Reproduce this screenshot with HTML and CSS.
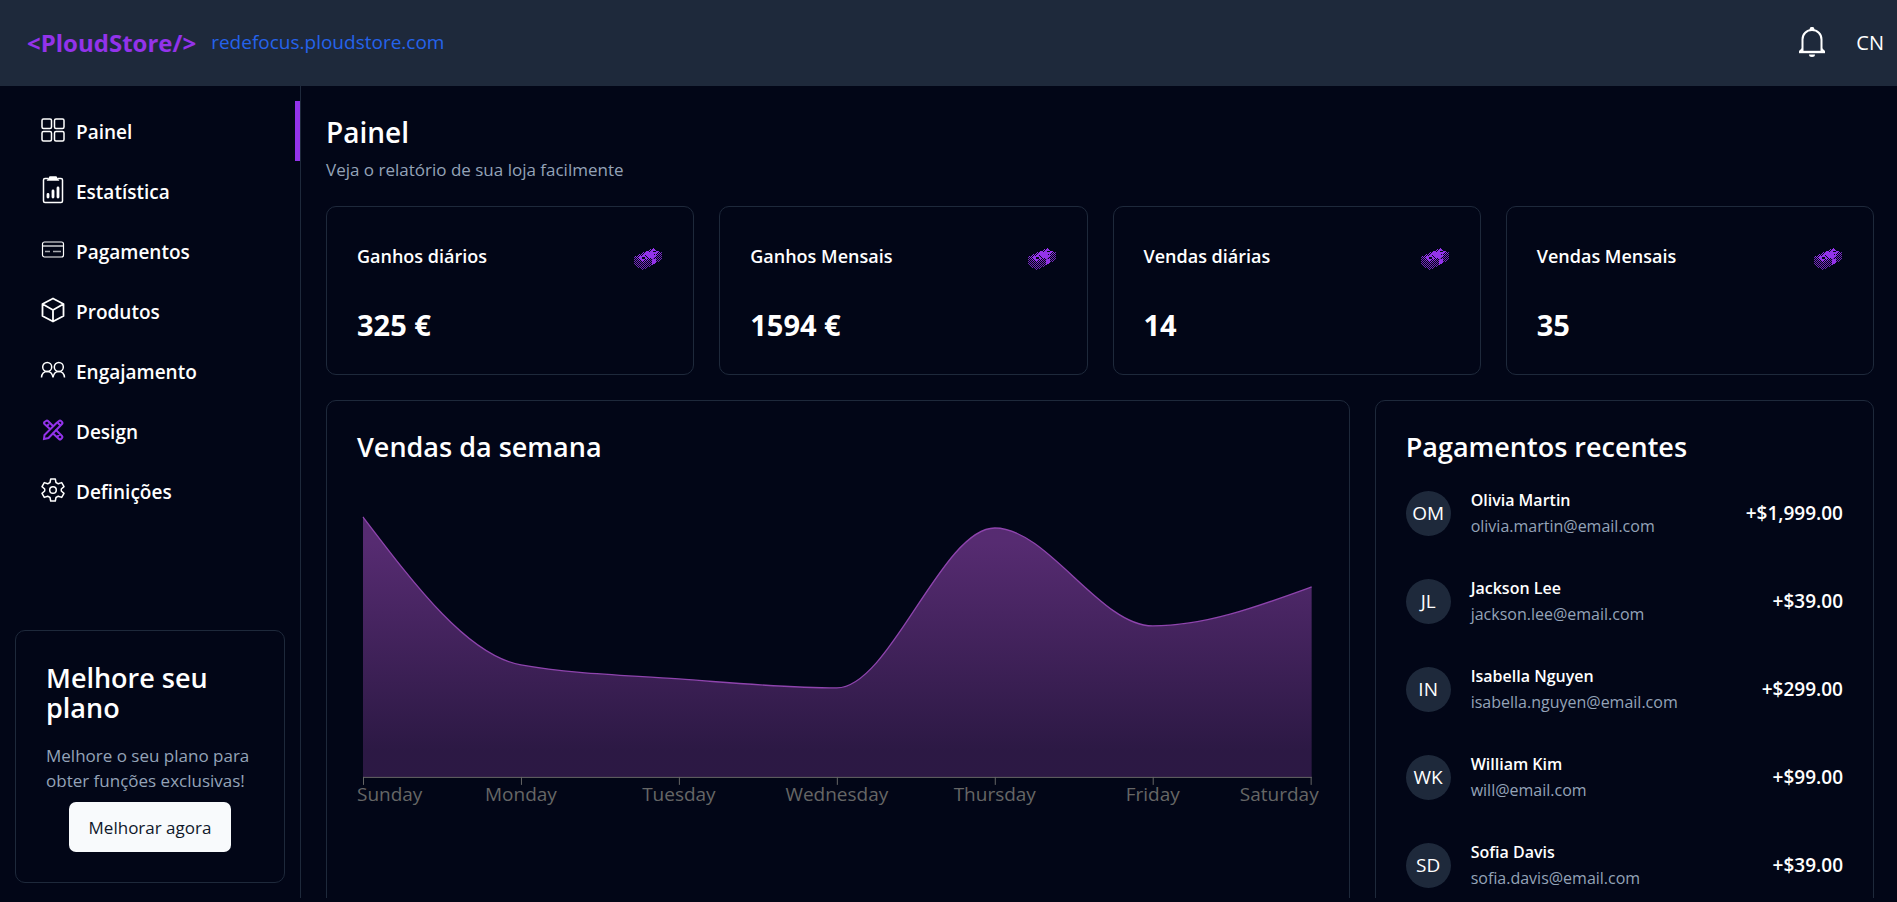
FILE: index.html
```html
<!DOCTYPE html>
<html lang="pt">
<head>
<meta charset="utf-8">
<title>PloudStore – Painel</title>
<link rel="stylesheet" href="styles.css">
</head>
<body>
<svg class="defs" aria-hidden="true">
  <defs>
    <pattern id="mesh" width="2" height="2" patternUnits="userSpaceOnUse">
      <rect width="1" height="1" fill="#9333ea"/><rect x="1" y="1" width="1" height="1" fill="#9333ea"/>
    </pattern>
    <symbol id="money" viewBox="0 0 28 24">
      <path d="M0 10 9 15 28 5V13L9 23 0 18Z" fill="url(#mesh)" opacity=".75"/>
      <path d="M0 10 19 1 28 6 9 16Z" fill="url(#mesh)"/>
      <path d="M4 11 9 8 14 11 9 14ZM15 5 20 2 25 5 19 8Z" fill="#9333ea"/>
      <path d="M8 10h3v2H8zM19 4h3v1h-3z" fill="#020617"/>
      <path d="M9 7 14 4 23 9 18 12Z" fill="#9333ea"/>
      <path d="M18 13 22 11V16L18 18Z" fill="#9333ea"/>
    </symbol>
  </defs>
</svg>
<header class="topbar">
  <div class="brand">
    <span class="logo">&lt;PloudStore/&gt;</span>
    <a class="domain" href="#">redefocus.ploudstore.com</a>
  </div>
  <div class="account">
    <button class="bell" type="button" aria-label="Notificações">
      <svg width="28" height="32" viewBox="0 0 28 32" fill="none" stroke="#fff" stroke-width="2">
        <path d="M1 26h26" stroke-width="2.4"/>
        <path d="M4.5 25.5V13.5C4.500 8 8.500 4 14 4s9.500 4 9.500 9.500v12" />
        <path d="M2 25.500 4.500 23M26 25.500 23.500 23"/>
        <path d="M11.500 4a2.500 3 0 0 1 5 0zM11 28.500h6a3 2.500 0 0 1-6 0z" fill="#fff" stroke="none"/>
        <circle cx="14" cy="3" r="2" fill="#fff" stroke="none"/>
      </svg>
    </button>
    <span class="initials">CN</span>
  </div>
</header>
<div class="shell">
  <aside class="sidebar">
    <nav class="menu">
      <a class="item active" href="#"><svg class="icon" viewBox="0 0 24 24"><rect x="1" y="1" width="9.500" height="9.500" rx="1.500"/><rect x="13.500" y="1" width="9.500" height="9.500" rx="1.500"/><rect x="1" y="13.500" width="9.500" height="9.500" rx="1.500"/><rect x="13.500" y="13.500" width="9.500" height="9.500" rx="1.500"/></svg>Painel</a>
      <a class="item" href="#"><svg class="icon" viewBox="0 0 24 24"><path d="M7 .5H4Q2.500 .5 2.500 2v21Q2.500 24.500 4 24.500H20Q21.500 24.500 21.500 23V2Q21.500 .5 20 .5H17"/><path class="solid" d="M9-1h6l2 3H7z"/><path d="M7 16.500v2.500M12 13v6M17 10v9" stroke-width="2.800" stroke-linecap="round"/></svg>Estatística</a>
      <a class="item" href="#"><svg class="icon" viewBox="0 0 24 24"><rect x="1.500" y="4" width="21" height="15" rx="2" stroke-width="1.200"/><path d="M1.500 8h21" stroke-width="1.200"/><path d="M4 13.500h5M12 13.500h8" stroke-width="1.600" opacity=".65"/></svg>Pagamentos</a>
      <a class="item" href="#"><svg class="icon" viewBox="0 0 24 24"><path d="M12 .5 22.500 6V18L12 23.500 1.500 18V6ZM1.500 6 12 12 22.500 6M12 12V23.500" stroke-width="1.800" stroke-linejoin="round"/></svg>Produtos</a>
      <a class="item" href="#"><svg class="icon" viewBox="0 0 24 24"><circle cx="6.200" cy="9" r="4.500"/><circle cx="17.800" cy="9" r="4.500"/><path d="M.5 19.500C.8 16 3 13.500 6.200 13.500S11.500 16 12 19.500C12.500 16 14.500 13.500 17.800 13.500S23.200 16 23.500 19.500"/></svg>Engajamento</a>
      <a class="item" href="#"><svg class="icon purple" viewBox="0 0 24 24"><path d="M15.500 5 18 3q1-1 2 0L21 4q1 1 0 2L7.500 20 3 21 3.500 17ZM17 5 19.500 7.500"/><path d="M9.500 11.500 3.500 6q-1-1 0-2L5 3q1-1 2 0L12 8M14.500 11.500 21 18q1 1 0 2L20 21q-1 1-2 0L11.500 15M6 8 8 6M16.500 18.500 18.500 16.500"/></svg>Design</a>
      <a class="item" href="#"><svg class="icon" viewBox="0 0 24 24"><path d="M9.700 1h4.600l.7 3.500 2.300 1.300 3.400-1.200 2.300 4L20.300 11v2l2.700 2.400-2.300 4-3.400-1.200L15 19.500 14.300 23H9.700L9 19.500l-2.300-1.300-3.400 1.200-2.300-4L3.700 13v-2L1 8.600l2.300-4 3.400 1.200L9 4.500Z" stroke-linejoin="round"/><circle cx="12" cy="12" r="3.300"/></svg>Definições</a>
    </nav>
    <section class="card upgrade">
      <h2>Melhore seu plano</h2>
      <p class="muted">Melhore o seu plano para obter funções exclusivas!</p>
      <button class="cta" type="button">Melhorar agora</button>
    </section>
  </aside>
  <main class="main">
    <div class="heading">
      <h1>Painel</h1>
      <p class="muted">Veja o relatório de sua loja facilmente</p>
    </div>
    <div class="stats">
      <section class="card stat"><div class="stat-head"><h3>Ganhos diários</h3><svg class="money"><use href="#money"/></svg></div><p class="value">325 €</p></section>
      <section class="card stat"><div class="stat-head"><h3>Ganhos Mensais</h3><svg class="money"><use href="#money"/></svg></div><p class="value">1594 €</p></section>
      <section class="card stat"><div class="stat-head"><h3>Vendas diárias</h3><svg class="money"><use href="#money"/></svg></div><p class="value">14</p></section>
      <section class="card stat"><div class="stat-head"><h3>Vendas Mensais</h3><svg class="money"><use href="#money"/></svg></div><p class="value">35</p></section>
    </div>
    <div class="panels">
      <section class="card panel wide">
        <h2>Vendas da semana</h2>
        <svg class="chart" viewBox="0 0 962 420" role="img" aria-label="Vendas da semana">
          <defs><linearGradient id="area" gradientUnits="userSpaceOnUse" x1="0" y1="27" x2="0" y2="287"><stop offset=".1" stop-color="#8e44ad" stop-opacity=".6"/><stop offset=".9" stop-color="#8e44ad" stop-opacity=".3"/></linearGradient></defs>
          <path fill="url(#area)" d="M6 27C58.700 96.300 111.300 165.700 164 175S269.300 185.200 322 189S427.300 198 480 198S585.300 38 638 38S743.300 136 796 136S901.300 116.500 955 97V287H6Z"/>
          <path class="line" d="M6 27C58.700 96.300 111.300 165.700 164 175S269.300 185.200 322 189S427.300 198 480 198S585.300 38 638 38S743.300 136 796 136S901.300 116.500 955 97"/>
          <path class="axis" d="M6 287.500H955M6.500 287v8M164.500 287v8M322.500 287v8M480.500 287v8M638.500 287v8M796.500 287v8M954.500 287v8"/>
          <g class="days">
            <text x="0" y="311" text-anchor="start">Sunday</text><text x="164" y="311">Monday</text><text x="322" y="311">Tuesday</text><text x="480" y="311">Wednesday</text><text x="638" y="311">Thursday</text><text x="796" y="311">Friday</text><text x="962" y="311" text-anchor="end">Saturday</text>
          </g>
        </svg>
      </section>
      <section class="card panel">
        <h2>Pagamentos recentes</h2>
        <ul class="payments">
          <li><span class="avatar">OM</span><div class="who"><b>Olivia Martin</b><span class="mail">olivia.martin@email.com</span></div><span class="amount">+$1,999.00</span></li>
          <li><span class="avatar">JL</span><div class="who"><b>Jackson Lee</b><span class="mail">jackson.lee@email.com</span></div><span class="amount">+$39.00</span></li>
          <li><span class="avatar">IN</span><div class="who"><b>Isabella Nguyen</b><span class="mail">isabella.nguyen@email.com</span></div><span class="amount">+$299.00</span></li>
          <li><span class="avatar">WK</span><div class="who"><b>William Kim</b><span class="mail">will@email.com</span></div><span class="amount">+$99.00</span></li>
          <li><span class="avatar">SD</span><div class="who"><b>Sofia Davis</b><span class="mail">sofia.davis@email.com</span></div><span class="amount">+$39.00</span></li>
        </ul>
      </section>
    </div>
  </main>
</div>
</body>
</html>
```
FILE: styles.css
```css
* { box-sizing: border-box; margin: 0; padding: 0; }
body {
  height: 100vh;
  padding-bottom: 4px;
  display: flex;
  flex-direction: column;
  overflow: hidden;
  background: #020617;
  color: #fff;
  font-family: "Open Sans", "Noto Sans", sans-serif;
  font-size: 19px;
}
a { color: inherit; text-decoration: none; }
button { font: inherit; border: 0; cursor: pointer; }
h1, h2 { line-height: 30px; font-weight: 600; }
h1 { font-size: 28px; }
h2 { font-size: 27px; }
.defs { position: absolute; width: 0; height: 0; }

.topbar {
  flex: none;
  height: 86px;
  padding: 0 13px 2px 27px;
  display: flex;
  align-items: center;
  justify-content: space-between;
  background: #1e293b;
}
.brand { display: flex; align-items: center; gap: 15px; }
.logo { font-size: 24px; font-weight: 700; color: #9333ea; }
.domain { color: #2563eb; }
.account { display: flex; align-items: center; gap: 30px; }
.initials { font-size: 20px; }
.bell { display: flex; background: none; }

.shell { flex: 1; min-height: 0; display: flex; }
.sidebar {
  flex: none;
  width: 301px;
  padding: 15px 0;
  display: flex;
  flex-direction: column;
  justify-content: space-between;
  border-right: 1px solid #1e293b;
}
.item {
  height: 60px;
  padding: 2px 0 0 41px;
  display: flex;
  align-items: center;
  gap: 11px;
  font-weight: 600;
}
.active { border-right: 5px solid #9333ea; }
.icon {
  width: 24px;
  height: 24px;
  margin-bottom: 4px;
  overflow: visible;
  fill: none;
  stroke: #fff;
  stroke-width: 1.5px;
}
.purple { stroke: #9333ea; stroke-width: 2px; }
.solid { fill: #fff; }

.card { border: 1px solid #1e293b; border-radius: 10px; }
.upgrade { margin: 0 15px; padding: 32px 30px 30px; }
.muted { color: #94a3b8; font-size: 17px; line-height: 25px; }
.upgrade .muted { margin: 20px 0 9px; }
.cta {
  display: block;
  height: 50px;
  margin: 0 auto;
  padding: 0 20px;
  border-radius: 7px;
  background: #f8fafc;
  color: #0f172a;
  font-size: 17px;
  font-weight: 500;
}

.main { flex: 1; min-width: 0; padding: 31px 23px 0 25px; overflow: hidden; }
.heading { display: grid; gap: 10px; margin-bottom: 24px; }
.stats { display: grid; grid-template-columns: repeat(4, 1fr); gap: 25px; }
.stat { height: 169px; padding: 34px 30px 0; }
.stat-head { display: flex; justify-content: space-between; align-items: center; }
.stat h3 { font-size: 18px; line-height: 28px; font-weight: 600; }
.money { width: 28px; height: 24px; margin: 6px 1px 0 0; shape-rendering: crispEdges; }
.value { margin-top: 35px; font-size: 29px; line-height: 38px; font-weight: 700; }

.panels { display: grid; grid-template-columns: repeat(3, 1fr); gap: 25px; margin-top: 25px; }
.panel { padding: 31px 30px; }
.wide { grid-column: span 2; }
.chart { display: block; width: 100%; height: auto; margin-top: 28px; }
.line { fill: none; stroke: #8e44ad; stroke-width: 1.3px; }
.axis { fill: none; stroke: #666; }
.days { fill: #666; font-size: 19px; text-anchor: middle; }
.payments { list-style: none; display: grid; gap: 36px; margin-top: 25px; }
.payments li { height: 52px; display: flex; align-items: center; gap: 20px; }
.avatar {
  width: 45px;
  height: 45px;
  display: grid;
  place-items: center;
  border-radius: 50%;
  background: #1e293b;
}
.who { flex: 1; display: grid; gap: 1px; line-height: 25px; }
.who b { font-size: 16px; font-weight: 600; }
.mail { font-size: 16px; color: #94a3b8; }
.amount { font-weight: 600; font-size: 19px; }
```
